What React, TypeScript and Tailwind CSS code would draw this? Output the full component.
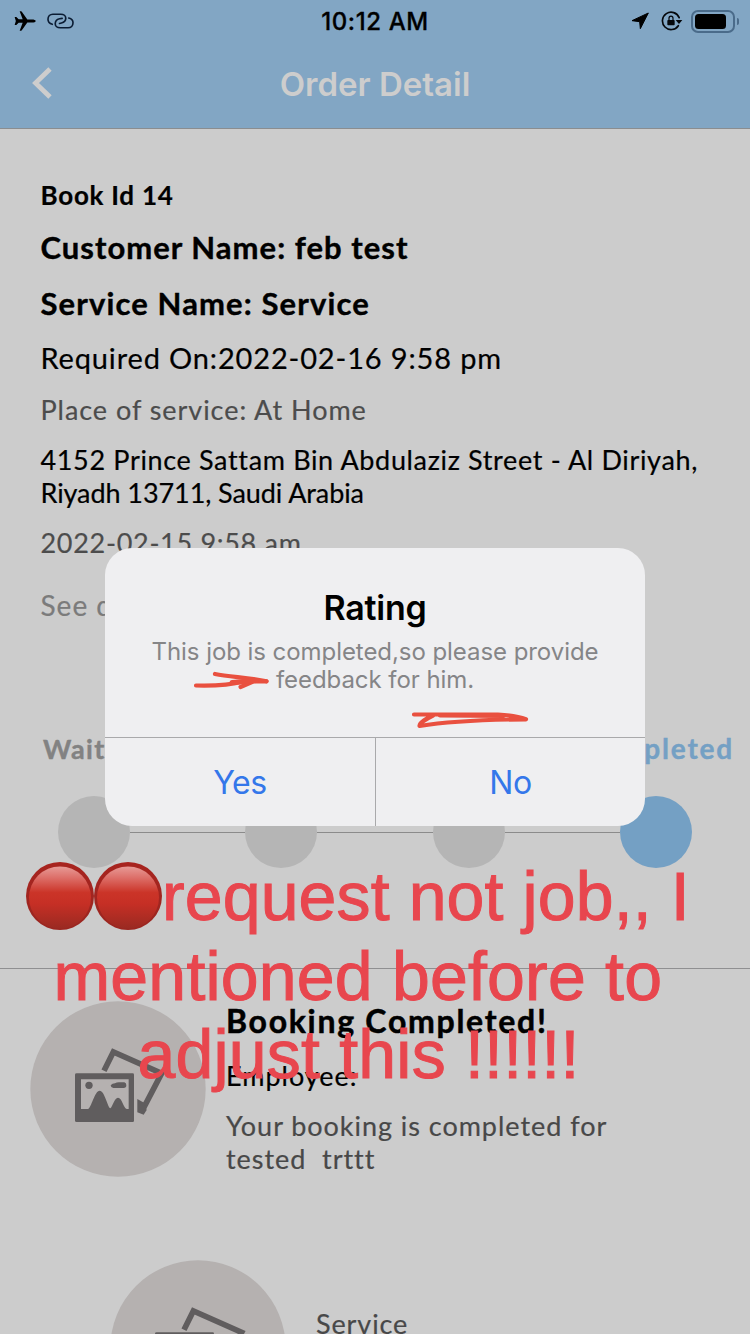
import React from "react";

const LATO = "font-['Lato','Noto_Sans',sans-serif]";
const INTER = "font-['Inter','Roboto',sans-serif]";

function AirplaneIcon() {
  return (
    <svg className="h-[20px] w-[22px]" viewBox="0 0 66 60" fill="#000">
      <path d="M65 30 C65 33 60 34.5 54 34.5 H40 L24 57 Q23 59 21 59 H17 L26 35 H14 L7 42 H2 L5.500 30 L2 18 H7 L14 25 H26 L17 1 H21 Q23 1 24 3 L40 25.500 H54 C60 25.500 65 27 65 30 Z" />
    </svg>
  );
}

function LinkIcon() {
  return (
    <svg className="h-[16px] w-[27px]" viewBox="0 0 82 48" fill="none" stroke="#0b1c33" strokeWidth="5" strokeLinecap="round">
      <path d="M16 34 C8 32 3 26 3 19 C3 10 9 3.500 18 3.500 L42 3.500 C51 3.500 57 9 57 16 C57 24 53 28 44 30 L38 31.500" />
      <path d="M66 15 C74 17 79 22 79 29 C79 38 73 44.500 64 44.500 L40 44.500 C31 44.500 25 39 25 32 C25 24 29 19 38 17 L46 16" />
    </svg>
  );
}

function LocationIcon() {
  return (
    <svg className="mr-[12px] h-[18px] w-[18px]" viewBox="0 0 54 54" fill="#000" stroke="#000" strokeWidth="3" strokeLinejoin="round">
      <path d="M52 3 L28 50 L26 29 L3 26 Z" />
    </svg>
  );
}

function RotationLock() {
  return (
    <svg className="h-[20px] w-[22px]" viewBox="0 0 66 60" fill="none">
      <path d="M52 44 A26 26 0 1 1 54.500 20" stroke="#05080c" strokeWidth="5" strokeLinecap="round" />
      <path d="M44 27 L64 27 L54 39 Z" fill="#05080c" />
      <rect x="19" y="27" width="22" height="16" rx="2.5" fill="#05080c" />
      <path d="M24 29 V22 A6 6.500 0 0 1 36 22 V29" stroke="#05080c" strokeWidth="3.6" />
    </svg>
  );
}

function StatusBar() {
  return (
    <div className="grid h-10 grid-cols-3 items-center pl-[14px] pr-[11px]">
      <div className="flex items-center gap-[11px]">
        <AirplaneIcon />
        <LinkIcon />
      </div>
      <div className={`${INTER} pr-[3px] pt-[2px] text-center text-[24px] font-medium leading-10 tracking-[0.6px] text-black [-webkit-text-stroke:0.3px]`}>10:12 AM</div>
      <div className="flex items-center justify-end">
        <LocationIcon />
        <RotationLock />
        <div className="ml-[8px] flex h-[23px] w-[44px] items-center rounded-[7px] border-2 border-[#4a6b8a] px-[2px]">
          <div className="h-[15px] w-[31px] rounded-[3.5px] bg-black" />
        </div>
        <div className="ml-[2px] h-[7px] w-[2px] rounded-r-full bg-[#4a6b8a]" />
      </div>
    </div>
  );
}

function Header() {
  return (
    <header className="h-[129px] border-b border-[#8a8d90] bg-[#82a6c4]">
      <StatusBar />
      <div className="grid h-[88px] grid-cols-[60px_1fr_60px] items-center">
        <svg className="-mt-[2px] ml-[30px] h-[34px] w-[22px]" viewBox="0 0 22 34" fill="none" stroke="#cdcdcd" strokeWidth="4.8">
          <path d="M20 3 L5.500 17 L20 31" />
        </svg>
        <h1 className={`${INTER} text-center text-[33px] font-semibold leading-[44px] text-[#cdcdcd]`}>Order Detail</h1>
      </div>
    </header>
  );
}

function Avatar() {
  return (
    <svg className="h-[176px] w-[176px] shrink-0" viewBox="90 183 528 528">
      <circle cx="354" cy="447" r="263" fill="#b5b1b0" />
      <path d="M312 392 L340 336 L485 400 L425 515" fill="none" stroke="#605d5e" strokeWidth="17" />
      <path d="M412 477 L432 488 L440 510 L431 524 L412 517 Z" fill="#605d5e" />
      <path
        fillRule="evenodd"
        fill="#605d5e"
        d="M230 400 H398 Q402 400 402 404 V542 Q402 546 398 546 H230 Q225 546 225 542 V404 Q225 400 230 400 Z M243 418 V507 H264 C274 504 284 452 299 452 C314 452 322 500 331 505 C338 500 343 473 354 473 C366 473 370 503 380 507 H386 V418 Z"
      />
      <circle cx="267" cy="436" r="11" fill="#605d5e" />
      <path d="M332 436 Q337 430 345 430 Q352 425 362 427 H373 Q379 428 379 436 Q379 444 371 444 H340 Q332 443 332 436 Z" fill="#605d5e" />
    </svg>
  );
}

function Progress() {
  return (
    <section className="mt-[110px]">
      <div className="flex h-[33px] justify-between pl-[43px] pr-[16px] text-[27px] font-bold leading-[33px] [-webkit-text-stroke:0.4px]">
        <span className="tracking-[1.3px] text-[#828282]">Waiting</span>
        <span className="text-[28px] tracking-[1.8px] text-[#74a0c4]">Completed</span>
      </div>
      <div className="mt-[31px] flex items-center px-[58px]">
        <div className="size-[72px] shrink-0 rounded-full bg-[#b5b5b5]" />
        <div className="h-px flex-1 bg-[#8b8b8b]" />
        <div className="size-[72px] shrink-0 rounded-full bg-[#b5b5b5]" />
        <div className="h-px flex-1 bg-[#8b8b8b]" />
        <div className="size-[72px] shrink-0 rounded-full bg-[#b5b5b5]" />
        <div className="h-px flex-1 bg-[#8b8b8b]" />
        <div className="size-[72px] shrink-0 rounded-full bg-[#74a0c4]" />
      </div>
    </section>
  );
}

function Dialog() {
  return (
    <div className={`${INTER} absolute left-[105px] top-[548px] flex h-[278px] w-[540px] flex-col overflow-hidden rounded-[27px] bg-[#efeff1]`}>
      <div className="h-[189px] pt-[40px] text-center">
        <h2 className="text-[34px] font-semibold leading-[40px] tracking-[-0.25px] text-black">Rating</h2>
        <p className="mt-[10px] text-[24px] leading-[28px] tracking-[-0.06px] text-[#858587]">
          This job is completed,so please provide
          <br />
          feedback for him.
        </p>
      </div>
      <div className="grid flex-1 grid-cols-[271px_269px] border-t border-[#a9a9ab] text-[32px] tracking-[-0.4px] text-[#3477ea]">
        <button className="border-r border-[#a9a9ab] pt-[2px]">Yes</button>
        <button className="pt-[2px]">No</button>
      </div>
    </div>
  );
}

function RedBall({ id }: { id: string }) {
  return (
    <svg className="-mt-[2px] h-[68px] w-[68px] shrink-0" viewBox="0 0 68 68">
      <defs>
        <linearGradient id={`${id}-body`} x1="0" y1="0" x2="0" y2="1">
          <stop offset="0" stopColor="#e79a96" />
          <stop offset="0.18" stopColor="#dd6f69" />
          <stop offset="0.42" stopColor="#cb3428" />
          <stop offset="0.6" stopColor="#c62f25" />
          <stop offset="1" stopColor="#9a2a22" />
        </linearGradient>
        <linearGradient id={`${id}-rim`} x1="0" y1="0" x2="0" y2="1">
          <stop offset="0" stopColor="#a8241f" />
          <stop offset="1" stopColor="#9a2620" />
        </linearGradient>
      </defs>
      <circle cx="34" cy="34" r="34" fill={`url(#${id}-rim)`} />
      <ellipse cx="34" cy="35.500" rx="31" ry="31" fill={`url(#${id}-body)`} />
    </svg>
  );
}

function Annotations() {
  return (
    <div className="absolute inset-0">
      <svg className="absolute left-0 top-0 h-[1334px] w-[750px]" viewBox="0 0 750 1334" fill="none" stroke="#e9503f" strokeWidth="4.2" strokeLinecap="round" strokeLinejoin="round">
        <path d="M196 685.500 C214 686 232 684.500 244 681.500 L266.500 681.300" />
        <path d="M215 674 C230 677 250 677.500 266.500 681.300" />
        <path d="M240.500 687 L252 682" />
        <path d="M232 682.500 L256 680.500" strokeWidth="5" />
        <path d="M414 714.500 L498 714.500 C512 715.500 521 717.500 526 719.300 C503 719.500 450 721 419.500 726 C420 722 426 719 433 715.500" />
        <path d="M440 715.500 L504 715.800" />
      </svg>
      <div className="absolute left-0 top-[857px] w-[750px] whitespace-nowrap font-['Liberation_Sans',Arial,sans-serif] text-[68px] leading-[79px] tracking-[0.12px] text-[#e8464e] [-webkit-text-stroke:1px_#e8464e]">
        <div className="flex h-[79px] items-center pl-[26px]">
          <RedBall id="ball-a" />
          <RedBall id="ball-b" />
          <span>request not job,, I</span>
        </div>
        <div className="pl-[53.500px] pt-px leading-[78px] tracking-[0.2px]">mentioned before to</div>
        <div className="pl-[137.500px] tracking-[0.2px]">adjust this !!!!!!</div>
      </div>
    </div>
  );
}

export default function App() {
  return (
    <div className={`${LATO} relative h-[1334px] w-[750px] overflow-hidden bg-[#cccccc] text-black`}>
      <Header />
      <main>
        <section className="whitespace-nowrap pl-[40.5px] pt-[49px] text-[27px] leading-[33px] [-webkit-text-stroke:0.2px]">
          <p className="text-[26px] font-bold leading-[34px] tracking-[0.75px]">Book Id 14</p>
          <p className="mt-[15px] text-[31px] font-bold leading-[40px] tracking-[1.03px] [-webkit-text-stroke:0.4px]">Customer Name: feb test</p>
          <p className="mt-[16px] text-[31px] font-bold leading-[40px] tracking-[1.12px] [-webkit-text-stroke:0.4px]">Service Name: Service</p>
          <p className="mt-[17px] text-[29px] leading-[36px] tracking-[0.85px]">Required On:2022-02-16 9:58 pm</p>
          <p className="mt-[17px] tracking-[0.95px] text-[#4c4c4c]">Place of service: At Home</p>
          <p className="mt-[17px] tracking-[0.65px]">
            4152 Prince Sattam Bin Abdulaziz Street - Al Diriyah,
            <br />
            <span className="tracking-[-0.08px]">Riyadh 13711, Saudi Arabia</span>
          </p>
          <p className="mt-[17px] tracking-[0.7px] text-[#4c4c4c]">2022-02-15 9:58 am</p>
          <p className="mt-[30px] text-[28px] tracking-[1px] text-[#7b7b7b]">See details</p>
        </section>
        <Progress />
        <section className="mt-[100px] border-t border-[#8f8f91]">
          <div className="flex gap-[20px] pl-[30px] pt-[32px] text-[27px] leading-[33px] [-webkit-text-stroke:0.2px]">
            <Avatar />
            <div>
              <p className="text-[32px] font-bold leading-[40px] tracking-[1.72px] [-webkit-text-stroke:0.5px]">Booking Completed!</p>
              <p className="mt-[18px] tracking-[1px]">Employee:</p>
              <p className="mt-[17px] whitespace-pre tracking-[0.96px] text-[#484848]">{"Your booking is completed for\ntested  trttt"}</p>
            </div>
          </div>
          <div className="flex gap-[30px] pl-[110px] pt-[83px]">
            <Avatar />
            <p className="pt-[47px] text-[27px] leading-[33px] tracking-[0.9px] text-[#484848] [-webkit-text-stroke:0.2px]">Service</p>
          </div>
        </section>
      </main>
      <Dialog />
      <Annotations />
    </div>
  );
}
